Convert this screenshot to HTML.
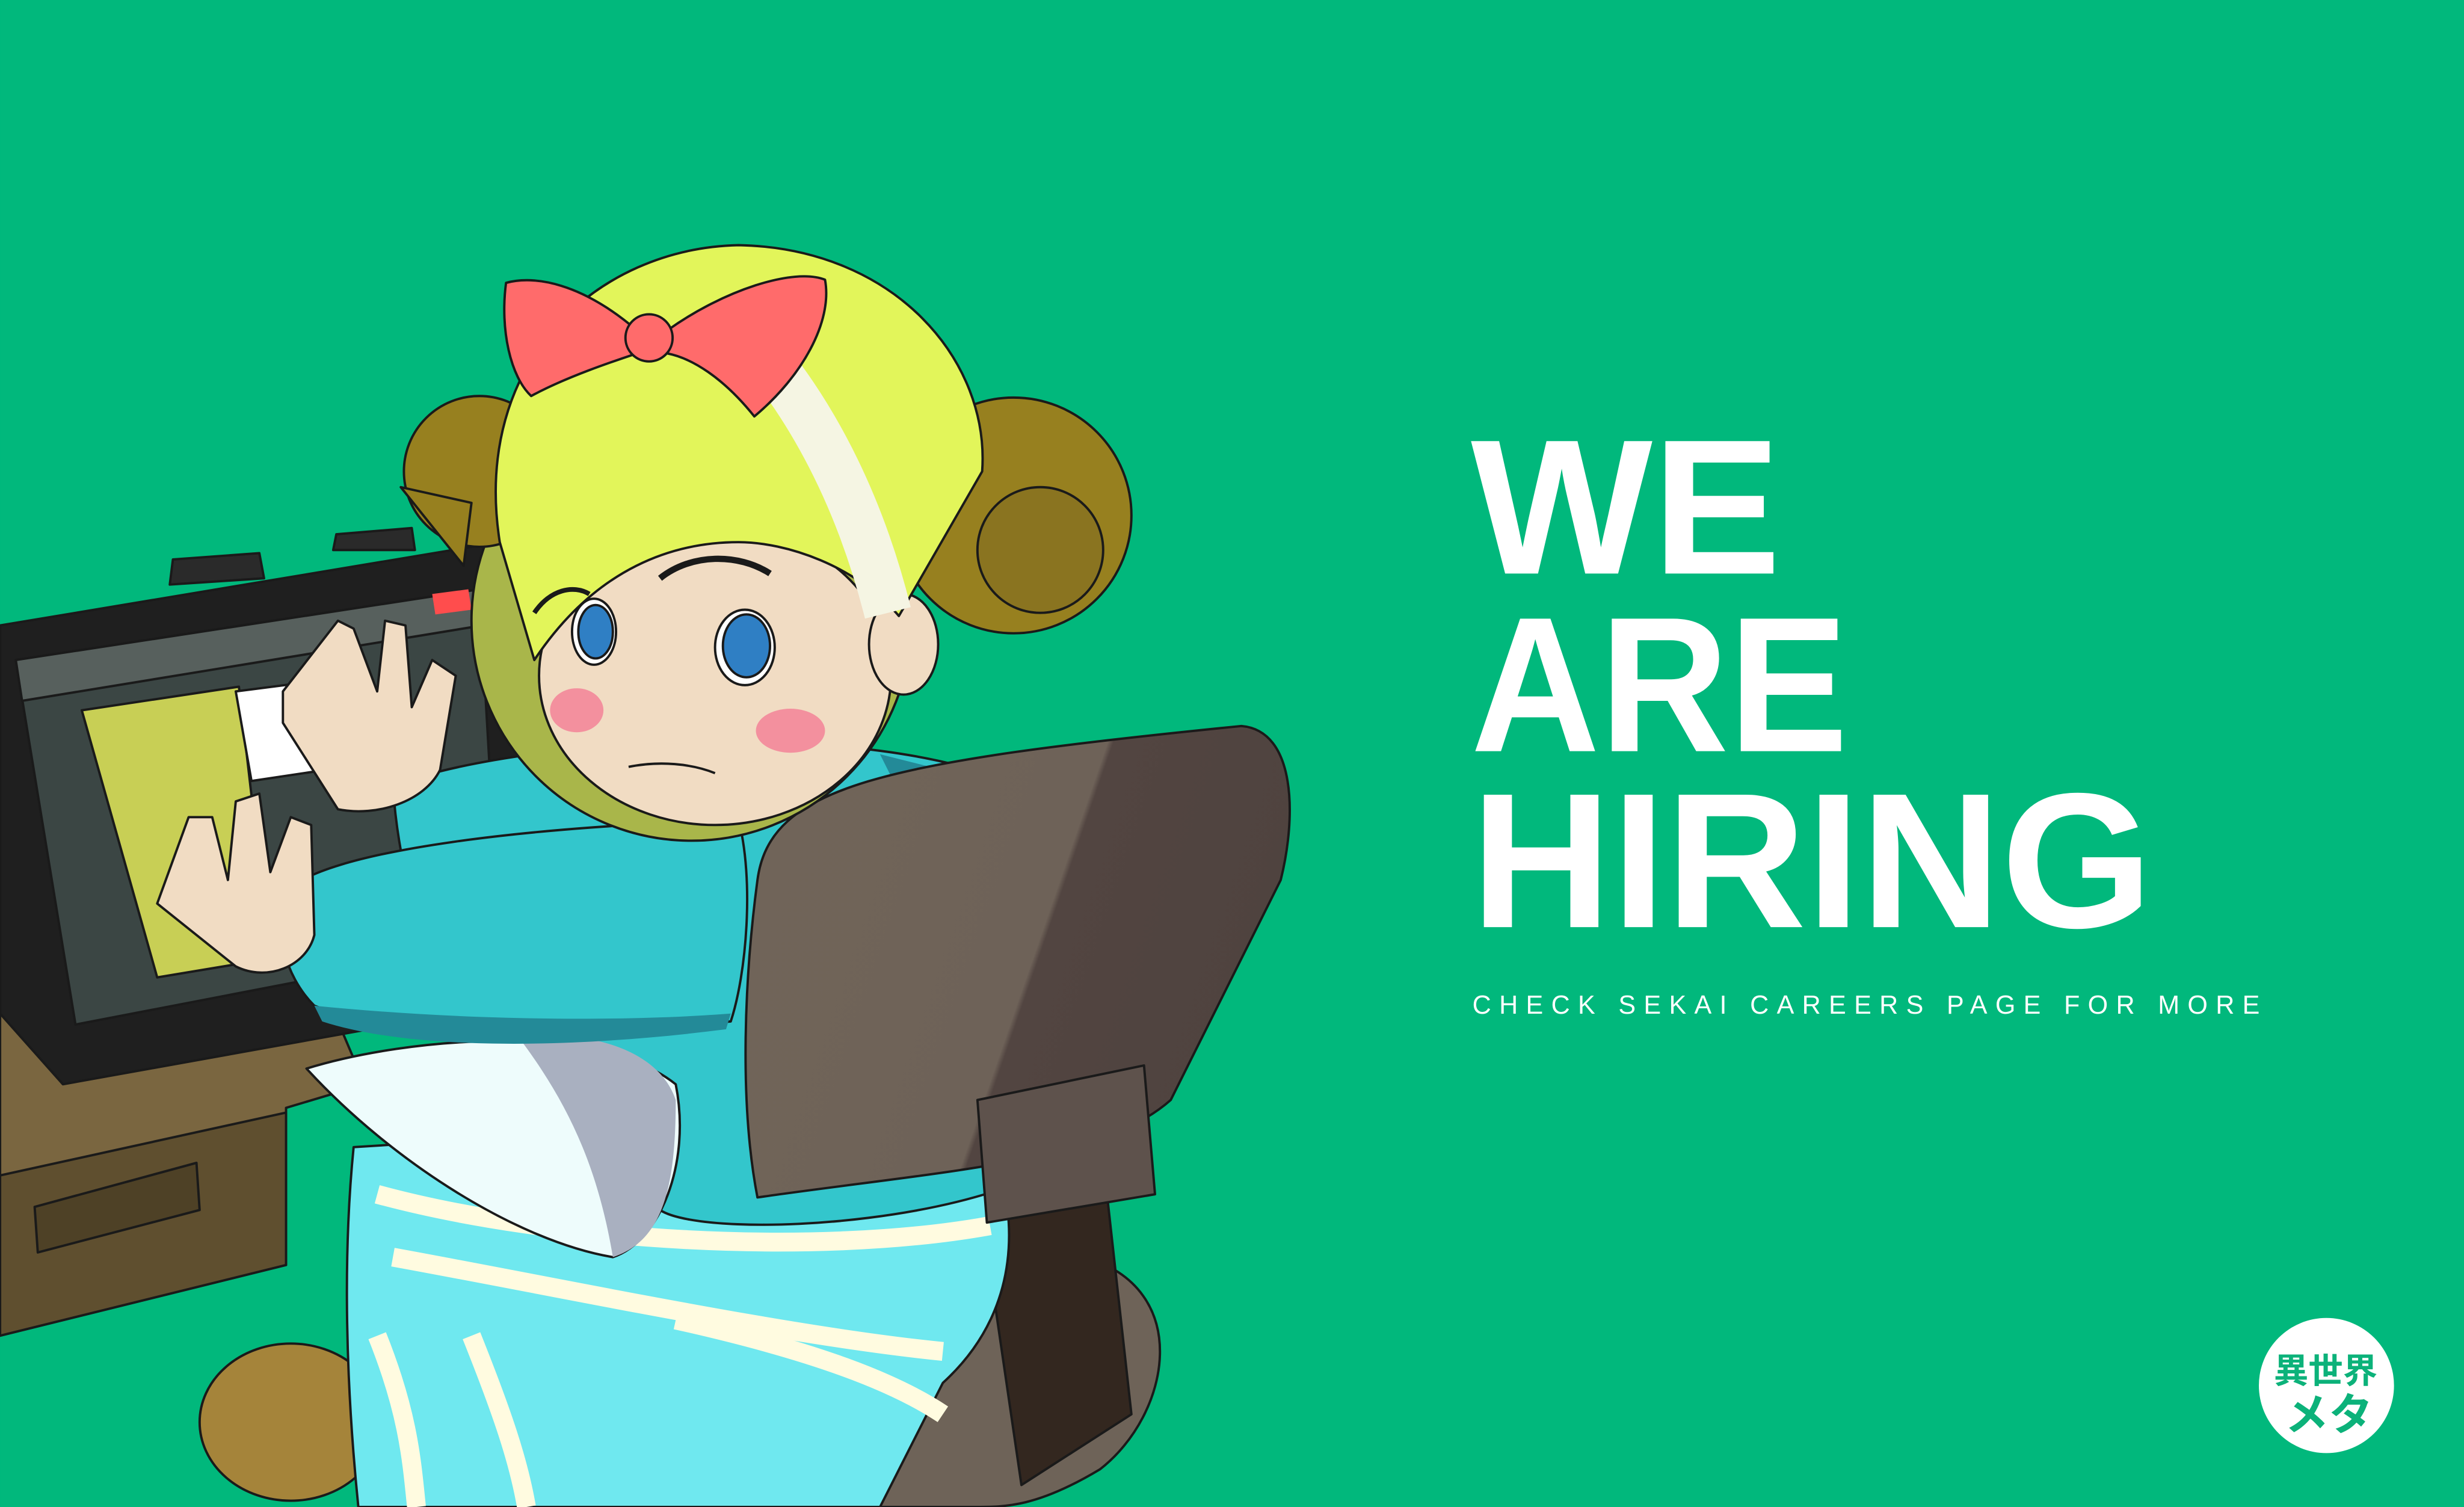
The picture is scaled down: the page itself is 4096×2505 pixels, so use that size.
<!DOCTYPE html>
<html><head><meta charset="utf-8"><style>
html,body{margin:0;padding:0;background:#01b87c;overflow:hidden}
svg{display:block}
</style></head><body>
<svg width="4096" height="2505" viewBox="0 0 1568 959" xmlns="http://www.w3.org/2000/svg">
<defs>
<linearGradient id="cb" x1="0" y1="0" x2="1" y2="0.3">
<stop offset="0" stop-color="#716559"/><stop offset="0.62" stop-color="#6e6258"/><stop offset="0.63" stop-color="#524541"/><stop offset="1" stop-color="#4f433f"/>
</linearGradient>
</defs>
<rect width="1568" height="959" fill="#01b87c"/>
<g stroke="#1a1a1a" stroke-width="1.5" stroke-linejoin="round">
<path d="M0,640 L40,688 L215,650 L232,690 L182,705 L182,805 L0,850 Z" fill="#7a6640"/>
<path d="M0,748 L182,708 L182,805 L0,850 Z" fill="#5f4f2f"/>
<path d="M22,768 L125,740 L127,770 L24,797 Z" fill="#4e4126"/>
<path d="M108,372 L110,356 L165,352 L168,368 Z M212,350 L214,340 L262,336 L264,350 Z" fill="#2a2a2a"/>
<path d="M0,398 L318,345 L332,470 L318,640 L40,690 L0,645 Z" fill="#1f1f1f"/>
<path d="M10,420 L305,375 L318,600 L48,652 Z" fill="#3b4644"/>
<path d="M10,420 L305,375 L307,398 L14,446 Z" fill="#57605d"/>
<path d="M52,452 L152,437 L172,610 L100,622 Z" fill="#c8cf55"/>
<path d="M275,378 L298,375 L300,388 L277,391 Z" fill="#ff4d4d" stroke="none"/>
<path d="M150,440 L212,432 L220,488 L160,497 Z" fill="#ffffff"/>
<ellipse cx="185" cy="905" rx="58" ry="50" fill="#a5843a"/>
<path d="M305,860 C330,800 520,780 690,800 C760,820 745,900 700,935 C660,959 640,959 620,959 L330,959 C305,930 300,890 305,860 Z" fill="#6e6358"/>
<path d="M620,740 L700,720 L720,900 L650,945 Z" fill="#33271f"/>
<path d="M225,730 L620,705 C650,760 655,830 600,880 L560,959 L228,959 C220,880 218,800 225,730 Z" fill="#6fe8ef"/>
<g fill="none" stroke="#fffbe0" stroke-width="12">
<path d="M240,760 C350,790 520,800 630,780"/>
<path d="M250,800 C360,820 500,850 600,860"/>
<path d="M240,850 C260,900 262,930 265,959"/>
<path d="M300,850 C320,900 330,930 335,959"/>
<path d="M430,840 C520,860 570,880 600,900"/>
</g>
<path d="M250,500 C330,470 520,460 620,490 C700,560 730,650 700,720 C650,780 450,790 420,770 C350,720 260,650 250,500 Z" fill="#33c6cc"/>
<path d="M560,480 L640,500 L700,560 L620,600 Z" fill="#238a98" stroke="none"/>
<path d="M195,680 C260,660 380,650 430,690 C440,740 420,790 390,800 C330,790 250,740 195,680 Z" fill="#eefcfc"/>
<path d="M330,660 C380,655 420,670 430,700 C430,760 420,790 390,800 C380,740 360,700 330,660 Z" fill="#a9b0c0" stroke="none"/>
<path d="M180,570 C200,540 350,525 470,522 C480,560 475,620 465,650 C360,660 250,660 200,640 C180,620 175,590 180,570 Z" fill="#33c6cc"/>
<path d="M200,640 C300,650 400,650 465,645 L462,655 C360,668 260,668 205,650 Z" fill="#238a98" stroke="none"/>
<path d="M180,440 L215,395 L225,400 L240,440 L245,395 L258,398 L262,450 L275,420 L290,430 L280,490 C270,510 240,520 215,515 L180,460 Z" fill="#f1dcc3"/>
<path d="M100,575 L120,520 L135,520 L145,560 L150,510 L165,505 L172,555 L185,520 L198,525 L200,595 C195,615 170,625 150,615 Z" fill="#f1dcc3"/>
<path d="M482,560 C490,500 560,485 790,462 C825,465 825,520 815,560 L745,700 C700,740 600,745 482,762 C470,700 474,620 482,560 Z" fill="url(#cb)"/>
<path d="M622,700 L728,678 L735,760 L628,778 Z" fill="#5e524c"/>
<circle cx="440" cy="395" r="140" fill="#a9b64a"/>
<circle cx="305" cy="300" r="48" fill="#97801f"/>
<path d="M255,310 L300,320 L295,360 Z" fill="#97801f"/>
<circle cx="645" cy="328" r="75" fill="#97801f"/>
<circle cx="662" cy="350" r="40" fill="#8a7420"/>
<ellipse cx="455" cy="430" rx="112" ry="95" fill="#f1dcc3"/>
<ellipse cx="575" cy="410" rx="22" ry="32" fill="#f1dcc3"/>
<path d="M318,345 C300,230 380,158 470,156 C570,158 630,230 625,300 L572,392 C545,360 500,345 470,345 C430,345 380,360 340,420 Z" fill="#e2f55a"/>
<path d="M472,210 C510,250 545,310 565,390" fill="none" stroke="#f5f5e3" stroke-width="30" stroke-linejoin="round"/>
<path d="M405,210 C370,180 340,175 322,180 C318,210 325,240 338,252 C360,240 390,230 405,225 Z" fill="#ff6b6b"/>
<path d="M425,210 C460,185 505,170 525,178 C530,205 510,240 480,265 C460,240 440,228 425,225 Z" fill="#ff6b6b"/>
<circle cx="413" cy="215" r="15" fill="#ff6b6b"/>
<ellipse cx="378" cy="402" rx="14" ry="21" fill="#ffffff"/>
<ellipse cx="379" cy="402" rx="11" ry="17" fill="#2f7fc4"/>
<ellipse cx="474" cy="412" rx="19" ry="24" fill="#ffffff"/>
<ellipse cx="475" cy="411" rx="15" ry="20" fill="#2f7fc4"/>
</g>
<path d="M420,368 C440,352 470,352 490,365" fill="none" stroke="#1a1a1a" stroke-width="4"/>
<path d="M340,390 C350,375 365,372 375,378" fill="none" stroke="#1a1a1a" stroke-width="3"/>
<ellipse cx="367" cy="452" rx="17" ry="14" fill="#f3909e"/>
<ellipse cx="503" cy="465" rx="22" ry="14" fill="#f3909e"/>
<path d="M400,488 C420,484 440,486 455,492" fill="none" stroke="#1a1a1a" stroke-width="1.5"/>
<g font-family="Liberation Sans, sans-serif" font-weight="bold" font-size="122.5" fill="#ffffff">
<text x="936" y="365">WE</text>
<text x="936" y="478" textLength="240" lengthAdjust="spacingAndGlyphs">ARE</text>
<text x="936" y="590" textLength="434" lengthAdjust="spacingAndGlyphs">HIRING</text>
</g>
<text x="937" y="645" font-family="Liberation Sans, sans-serif" font-size="16.5" fill="#ffffff" letter-spacing="5.1">CHECK SEKAI CAREERS PAGE FOR MORE</text>
<circle cx="1480.5" cy="881.7" r="43" fill="#ffffff"/>
<text x="1480" y="880" text-anchor="middle" font-family="Liberation Sans, 'Noto Sans CJK JP', sans-serif" font-weight="bold" font-size="22" fill="#0cb27a">異世界</text>
<text x="1482" y="910" text-anchor="middle" font-family="Liberation Sans, 'Noto Sans CJK JP', sans-serif" font-weight="bold" font-size="28" fill="#0cb27a">メタ</text>
</svg>
</body></html>
